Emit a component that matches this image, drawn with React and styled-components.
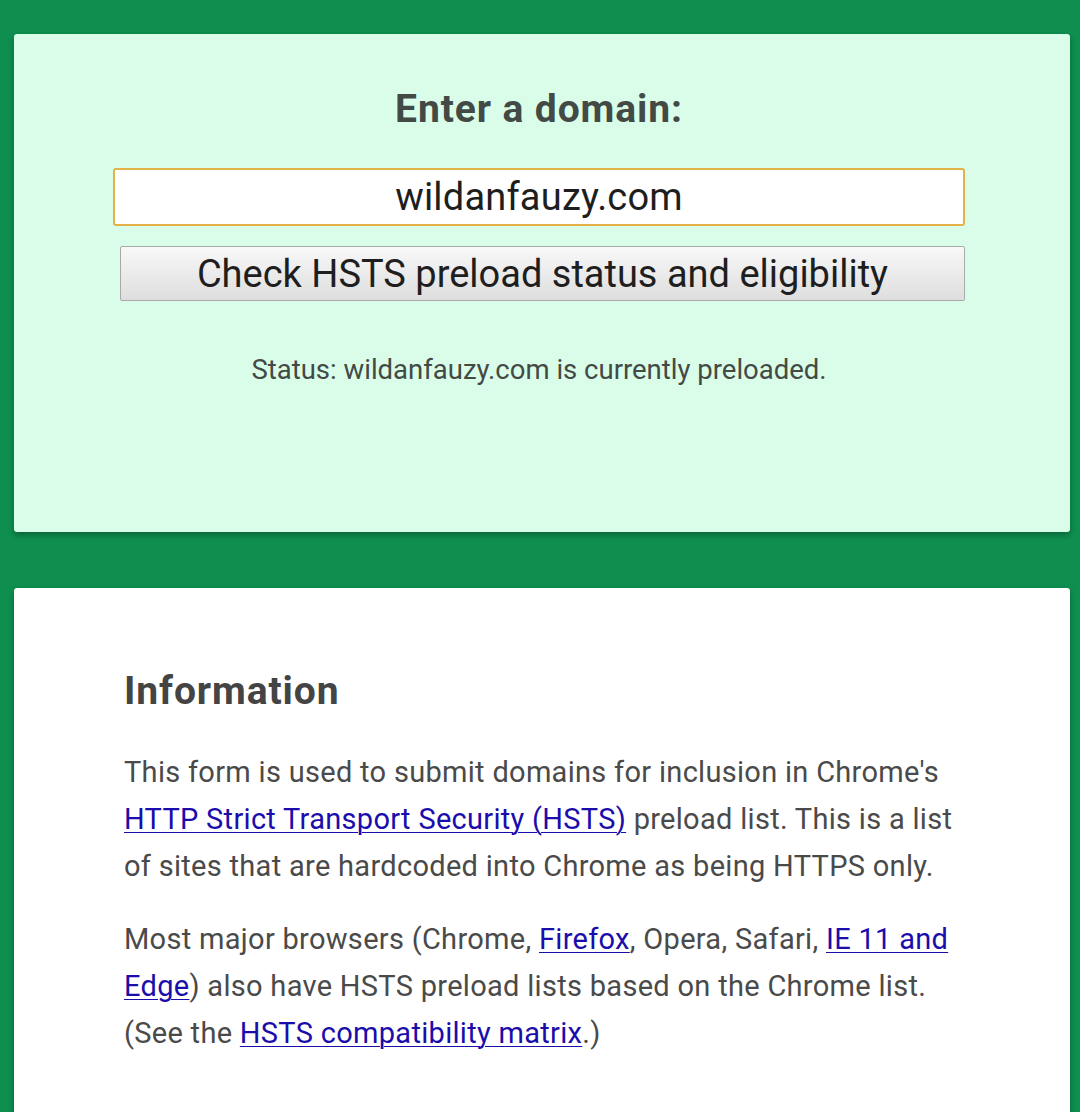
import React, { useState } from "react";
import styled, { createGlobalStyle } from "styled-components";

const GlobalStyle = createGlobalStyle`
  html, body {
    margin: 0;
    padding: 0;
    background: #0e8f4f;
    font-family: Roboto, "Liberation Sans", sans-serif;
  }
`;

const Page = styled.div`
  display: flex;
  flex-direction: column;
  gap: 56px;
  padding: 34px 10px 0 14px;
  min-height: 1112px;
  box-sizing: border-box;
`;

const Card = styled.section`
  background: ${(p) => (p.$tint ? "#dafdea" : "#ffffff")};
  border-radius: 3px;
  box-shadow: 0 3px 6px rgba(0, 0, 0, 0.3);
  box-sizing: border-box;
`;

const FormCard = styled(Card)`
  height: 498px;
  padding: 52px 105px 0 99px;
  display: flex;
  flex-direction: column;
  align-items: center;
`;

const Title = styled.h2`
  margin: 0;
  font-size: 39px;
  line-height: 46px;
  letter-spacing: 0.9px;
  font-weight: 700;
  color: #434a46;
`;

const DomainInput = styled.input`
  margin-top: 36px;
  width: 100%;
  height: 58px;
  box-sizing: border-box;
  border: 2px solid #e3b34a;
  border-radius: 3px;
  background: #ffffff;
  font-family: Roboto, "Liberation Sans", sans-serif;
  font-size: 38px;
  letter-spacing: 0.2px;
  color: #1e1e1e;
  text-align: center;
  outline: none;
`;

const CheckButton = styled.button`
  margin-top: 20px;
  align-self: flex-end;
  width: 845px;
  height: 55px;
  box-sizing: border-box;
  border: 1px solid #a9a9a9;
  border-radius: 2px;
  background: linear-gradient(#f8f8f8, #dedede);
  font-family: Roboto, "Liberation Sans", sans-serif;
  font-size: 38px;
  color: #1e1e1e;
  padding: 0;
`;

const Status = styled.p`
  margin: 52px 0 0;
  font-size: 27.5px;
  color: #434a46;
`;

const InfoCard = styled(Card)`
  flex: 1;
  border-radius: 3px 3px 0 0;
  padding: 80px 106px 40px 110px;
`;

const Heading = styled.h3`
  margin: 0 0 35px;
  font-size: 39px;
  line-height: 46px;
  letter-spacing: 0.9px;
  font-weight: 700;
  color: #444444;
`;

const Para = styled.p`
  margin: 0 0 26px;
  font-size: 29px;
  line-height: 47px;
  letter-spacing: 0.3px;
  color: #4a4a4a;
`;

const Link = styled.a`
  color: #1a0dab;
  text-decoration: underline;
  text-decoration-thickness: 1px;
  text-underline-offset: 3px;
`;

export default function App() {
  const [domain, setDomain] = useState("wildanfauzy.com");

  return (
    <>
      <GlobalStyle />
      <Page>
        <FormCard $tint>
          <Title>Enter a domain:</Title>
          <DomainInput value={domain} onChange={(e) => setDomain(e.target.value)} />
          <CheckButton>Check HSTS preload status and eligibility</CheckButton>
          <Status>Status: {domain} is currently preloaded.</Status>
        </FormCard>
        <InfoCard>
          <Heading>Information</Heading>
          <Para>
            This form is used to submit domains for inclusion in Chrome's{" "}
            <Link href="#">HTTP Strict Transport Security (HSTS)</Link> preload list. This is a
            list of sites that are hardcoded into Chrome as being HTTPS only.
          </Para>
          <Para>
            Most major browsers (Chrome, <Link href="#">Firefox</Link>, Opera, Safari,{" "}
            <Link href="#">IE 11 and Edge</Link>) also have HSTS preload lists based on the Chrome
            list. (See the <Link href="#">HSTS compatibility matrix</Link>.)
          </Para>
        </InfoCard>
      </Page>
    </>
  );
}
